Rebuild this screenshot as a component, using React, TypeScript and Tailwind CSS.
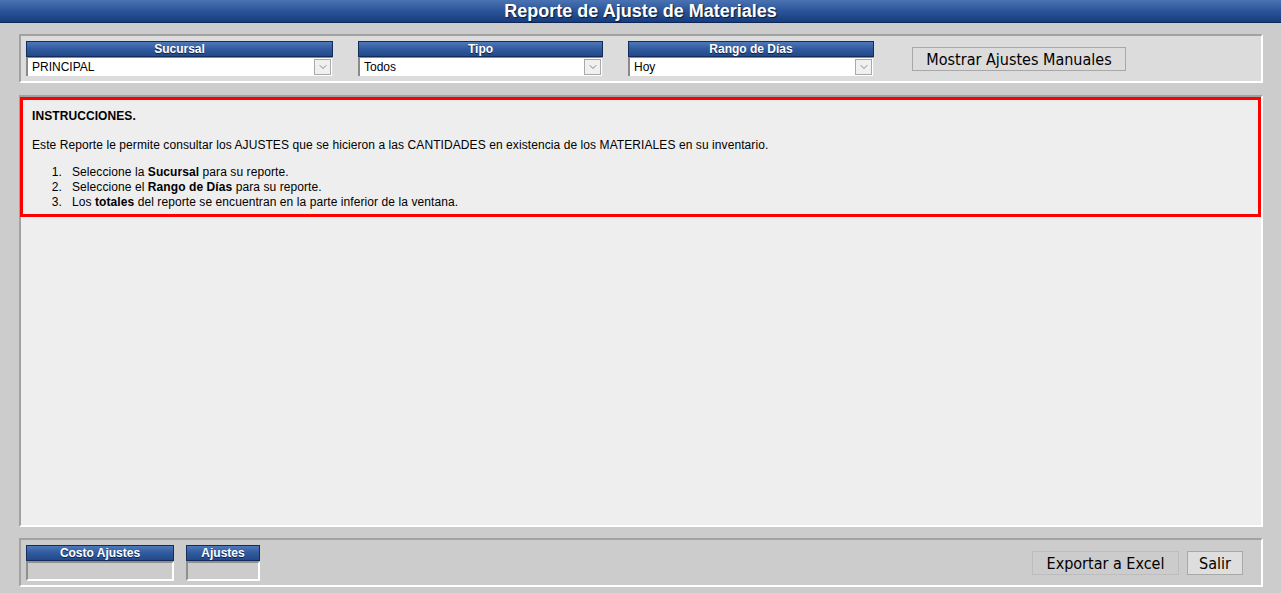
import { ChevronDown } from "lucide-react"

type FilterProps = {
  label: string
  value: string
  width: string
}

// blue caption strip used over every field
function Caption({ children, className = "" }: { children: React.ReactNode; className?: string }) {
  return (
    <div
      className={`flex h-[16px] items-center justify-center border border-[#142c5a] bg-gradient-to-b from-[#4f78b8] via-[#2f5a9e] to-[#23498a] font-['Liberation_Sans_Narrow','Liberation_Sans',sans-serif] text-[12px] font-bold leading-none text-white [text-shadow:0_1px_0_#0d2248] ${className}`}
    >
      {children}
    </div>
  )
}

function FilterSelect({ label, value, width }: FilterProps) {
  return (
    <div className={`flex flex-col ${width}`}>
      <Caption>{label}</Caption>
      <div className="flex h-[19px] items-center border-l-2 border-t border-[#8a8a8a] border-r border-r-[#e0e0e0] bg-white pl-[4px] pr-[1px]">
        <span className="flex-1 font-['Liberation_Sans',Arial,sans-serif] text-[12px] leading-none text-black">
          {value}
        </span>
        <span className="flex h-[16px] w-[17px] items-center justify-center border border-[#a9a9a9] bg-[#f0f0f0]">
          <ChevronDown size={12} strokeWidth={1.4} className="text-[#5a5a5a]" />
        </span>
      </div>
    </div>
  )
}

function TotalBox({ label, width }: { label: string; width: string }) {
  return (
    <div className={`flex flex-col ${width}`}>
      <Caption className="h-[15px]">{label}</Caption>
      <div className="h-[20px] border-2 border-l-[#8f8f8f] border-t-[#8f8f8f] border-r-white border-b-white bg-[#cccccc]" />
    </div>
  )
}

const btn =
  "flex h-[24px] items-center justify-center border pt-[2px] font-['DejaVu_Sans_Condensed','DejaVu_Sans',sans-serif] text-[16px] leading-none text-black"

const steps = [
  <>
    Seleccione la <b>Sucursal</b> para su reporte.
  </>,
  <>
    Seleccione el <b>Rango de Días</b> para su reporte.
  </>,
  <>
    Los <b>totales</b> del reporte se encuentran en la parte inferior de la ventana.
  </>,
]

export default function App() {
  return (
    <div className="flex h-[593px] w-full flex-col bg-[#cccccc] font-['Liberation_Sans',Arial,sans-serif]">
      <header className="flex h-[23px] items-center justify-center border-b border-[#0c2656] bg-gradient-to-b from-[#4a73b3] via-[#2b5599] to-[#183c7c]">
        <h1 className="font-['Liberation_Sans_Narrow','Liberation_Sans',sans-serif] text-[18px] font-bold leading-none text-white [text-shadow:1px_1px_1px_#0a1a3a]">
          Reporte de Ajuste de Materiales
        </h1>
      </header>

      <section className="mx-[19px] mr-[18px] mt-[11px] flex h-[49px] items-start border-2 border-l-[#a2a2a2] border-t-[#a2a2a2] border-r-white border-b-white bg-[#dcdcdc] pl-[5px] pt-[5px]">
        <FilterSelect label="Sucursal" value="PRINCIPAL" width="w-[307px]" />
        <div className="w-[25px]" />
        <FilterSelect label="Tipo" value="Todos" width="w-[245px]" />
        <div className="w-[25px]" />
        <FilterSelect label="Rango de Días" value="Hoy" width="w-[246px]" />
        <button
          type="button"
          className={`${btn} ml-[38px] mt-[6px] w-[214px] border-[#a8a8a8] bg-[#dcdcdc]`}
        >
          Mostrar Ajustes Manuales
        </button>
      </section>

      <section className="mx-[19px] mr-[18px] mt-[12px] h-[432px] border-2 border-l-[#a2a2a2] border-t-[#a2a2a2] border-r-white border-b-white bg-[#eeeeee]">
        <div className="-ml-px border-[3px] border-[#ff0000] px-[9px] pb-[4px] pt-[9px] text-[12px] leading-[15px] tracking-[0.08px] text-black">
          <p className="font-bold">INSTRUCCIONES.</p>
          <p className="mt-[14px]">
            Este Reporte le permite consultar los AJUSTES que se hicieron a las CANTIDADES en existencia
            de los MATERIALES en su inventario.
          </p>
          <ol className="mt-[12px] flex flex-col">
            {steps.map((step, i) => (
              <li key={i} className="flex">
                <span className="w-[40px] pr-[10px] text-right">{i + 1}.</span>
                <span>{step}</span>
              </li>
            ))}
          </ol>
        </div>
      </section>

      <section className="mx-[19px] mr-[18px] mt-[11px] flex h-[49px] items-start border-2 border-l-[#a2a2a2] border-t-[#a2a2a2] border-r-white border-b-white bg-[#cccccc] pl-[5px] pt-[5px]">
        <TotalBox label="Costo Ajustes" width="w-[148px]" />
        <div className="w-[12px]" />
        <TotalBox label="Ajustes" width="w-[74px]" />
        <div className="flex-1" />
        <button type="button" className={`${btn} mt-[6px] w-[147px] border-[#bdbdbd] bg-[#cccccc]`}>
          Exportar a Excel
        </button>
        <button
          type="button"
          className={`${btn} ml-[8px] mr-[18px] mt-[6px] w-[56px] border-[#a8a8a8] bg-[#dedede]`}
        >
          Salir
        </button>
      </section>
    </div>
  )
}
